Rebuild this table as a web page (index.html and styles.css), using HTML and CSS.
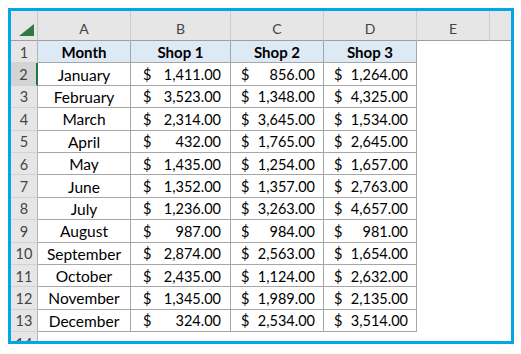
FILE: index.html
```html
<!DOCTYPE html>
<html>
<head>
<meta charset="utf-8">
<link rel="stylesheet" href="styles.css">
</head>
<body>
<div class="frame">
  <div class="sheet">
    <div class="corner"><svg width="15" height="12" viewBox="0 0 15 12"><polygon points="15,0 15,12 0,12" fill="#2f7a44"/></svg></div>
    <div class="colhead">A</div>
    <div class="colhead">B</div>
    <div class="colhead">C</div>
    <div class="colhead">D</div>
    <div class="colhead">E</div>
    <div class="colhead last"></div>

    <div class="rowhead">1</div>
    <div class="cell th">Month</div>
    <div class="cell th">Shop 1</div>
    <div class="cell th">Shop 2</div>
    <div class="cell th">Shop 3</div>
    <div class="blank"></div>
    <div class="blank"></div>

    <div class="rowhead sel">2</div>
    <div class="cell mon">January</div>
    <div class="cell acc b"><span>$</span><span>1,411.00</span></div>
    <div class="cell acc"><span>$</span><span>856.00</span></div>
    <div class="cell acc"><span>$</span><span>1,264.00</span></div>
    <div class="blank"></div>
    <div class="blank"></div>

    <div class="rowhead">3</div>
    <div class="cell mon">February</div>
    <div class="cell acc b"><span>$</span><span>3,523.00</span></div>
    <div class="cell acc"><span>$</span><span>1,348.00</span></div>
    <div class="cell acc"><span>$</span><span>4,325.00</span></div>
    <div class="blank"></div>
    <div class="blank"></div>

    <div class="rowhead">4</div>
    <div class="cell mon">March</div>
    <div class="cell acc b"><span>$</span><span>2,314.00</span></div>
    <div class="cell acc"><span>$</span><span>3,645.00</span></div>
    <div class="cell acc"><span>$</span><span>1,534.00</span></div>
    <div class="blank"></div>
    <div class="blank"></div>

    <div class="rowhead">5</div>
    <div class="cell mon">April</div>
    <div class="cell acc b"><span>$</span><span>432.00</span></div>
    <div class="cell acc"><span>$</span><span>1,765.00</span></div>
    <div class="cell acc"><span>$</span><span>2,645.00</span></div>
    <div class="blank"></div>
    <div class="blank"></div>

    <div class="rowhead">6</div>
    <div class="cell mon">May</div>
    <div class="cell acc b"><span>$</span><span>1,435.00</span></div>
    <div class="cell acc"><span>$</span><span>1,254.00</span></div>
    <div class="cell acc"><span>$</span><span>1,657.00</span></div>
    <div class="blank"></div>
    <div class="blank"></div>

    <div class="rowhead">7</div>
    <div class="cell mon">June</div>
    <div class="cell acc b"><span>$</span><span>1,352.00</span></div>
    <div class="cell acc"><span>$</span><span>1,357.00</span></div>
    <div class="cell acc"><span>$</span><span>2,763.00</span></div>
    <div class="blank"></div>
    <div class="blank"></div>

    <div class="rowhead">8</div>
    <div class="cell mon">July</div>
    <div class="cell acc b"><span>$</span><span>1,236.00</span></div>
    <div class="cell acc"><span>$</span><span>3,263.00</span></div>
    <div class="cell acc"><span>$</span><span>4,657.00</span></div>
    <div class="blank"></div>
    <div class="blank"></div>

    <div class="rowhead">9</div>
    <div class="cell mon">August</div>
    <div class="cell acc b"><span>$</span><span>987.00</span></div>
    <div class="cell acc"><span>$</span><span>984.00</span></div>
    <div class="cell acc"><span>$</span><span>981.00</span></div>
    <div class="blank"></div>
    <div class="blank"></div>

    <div class="rowhead">10</div>
    <div class="cell mon">September</div>
    <div class="cell acc b"><span>$</span><span>2,874.00</span></div>
    <div class="cell acc"><span>$</span><span>2,563.00</span></div>
    <div class="cell acc"><span>$</span><span>1,654.00</span></div>
    <div class="blank"></div>
    <div class="blank"></div>

    <div class="rowhead">11</div>
    <div class="cell mon">October</div>
    <div class="cell acc b"><span>$</span><span>2,435.00</span></div>
    <div class="cell acc"><span>$</span><span>1,124.00</span></div>
    <div class="cell acc"><span>$</span><span>2,632.00</span></div>
    <div class="blank"></div>
    <div class="blank"></div>

    <div class="rowhead">12</div>
    <div class="cell mon">November</div>
    <div class="cell acc b"><span>$</span><span>1,345.00</span></div>
    <div class="cell acc"><span>$</span><span>1,989.00</span></div>
    <div class="cell acc"><span>$</span><span>2,135.00</span></div>
    <div class="blank"></div>
    <div class="blank"></div>

    <div class="rowhead">13</div>
    <div class="cell mon">December</div>
    <div class="cell acc b"><span>$</span><span>324.00</span></div>
    <div class="cell acc"><span>$</span><span>2,534.00</span></div>
    <div class="cell acc"><span>$</span><span>3,514.00</span></div>
    <div class="blank"></div>
    <div class="blank"></div>

    <div class="rowhead">14</div>
    <div class="blank"></div>
    <div class="blank"></div>
    <div class="blank"></div>
    <div class="blank"></div>
    <div class="blank"></div>
    <div class="blank"></div>
  </div>
</div>
</body>
</html>
```

FILE: styles.css
```css
* { box-sizing: border-box; }
html, body { margin: 0; padding: 0; background: #fff; }
body { padding: 8px; }
.frame {
  width: 506px;
  height: 336px;
  border: 3px solid #05a6e4;
  overflow: hidden;
  background: #fff;
}
.sheet {
  display: grid;
  grid-template-columns: 27px 93px 100px 93px 93px 73px 21px;
  grid-template-rows: 30px repeat(14, 22.4px);
  font-family: Lato, "Liberation Sans", sans-serif;
  font-size: 14.5px;
  color: #000;
}
.corner {
  background: #e6e6e6;
  border-right: 1px solid #c8c8c8;
  border-bottom: 1px solid #9f9f9f;
  display: flex;
  align-items: flex-end;
  justify-content: flex-end;
  padding: 0 3px 4px 0;
}
.corner svg { display: block; }
.colhead {
  background: #e6e6e6;
  border-right: 1px solid #cdcdcd;
  border-bottom: 1px solid #9f9f9f;
  color: #444;
  font-size: 14px;
  display: flex;
  align-items: center;
  justify-content: center;
  padding-top: 6px;
}
.colhead.last { border-right: none; }
.rowhead {
  background: #e6e6e6;
  border-right: 1px solid #b4b4b4;
  border-bottom: 1px solid #d2d2d2;
  color: #444;
  font-size: 14.5px;
  display: flex;
  align-items: center;
  justify-content: center;
  padding-top: 1px;
}
.rowhead.sel {
  background: #d4d4d4;
  border-right: 2px solid #217346;
}
.cell {
  border-right: 1px solid #a6a6a6;
  border-bottom: 1px solid #a6a6a6;
  display: flex;
  align-items: center;
  padding-top: 1px;
  white-space: nowrap;
}
.th {
  background: #dde9f5;
  font-weight: bold;
  font-size: 15px;
  justify-content: center;
}
.mon { justify-content: center; font-size: 15.5px; }
.acc {
  justify-content: space-between;
  padding-left: 10px;
  padding-right: 8px;
}
.acc.b { padding-left: 12px; padding-right: 9px; }
.blank { background: #fff; }
```
